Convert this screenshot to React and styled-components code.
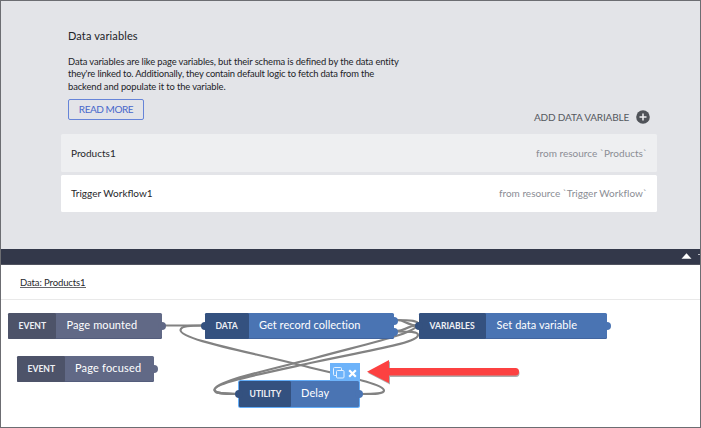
import React from 'react';
import styled, { createGlobalStyle } from 'styled-components';

const Global = createGlobalStyle`
  * { box-sizing: border-box; }
  body { margin: 0; font-family: Lato, "Open Sans", sans-serif; overflow: hidden; }
`;

const Frame = styled.main`
  display: flex;
  flex-direction: column;
  width: 701px;
  height: 428px;
  border: 1px solid #6c6d72;
  background: #fff;
  overflow: hidden;
`;

const VariablesPanel = styled.section`
  height: 248px;
  padding: 28px 43px 0 60px;
  background: #e3e4e8;
`;

const Intro = styled.div`
  padding-left: 7px;
  color: #222327;
`;

const Title = styled.h1`
  margin: 0;
  font-size: 11px;
  line-height: 14px;
  font-weight: 400;
  letter-spacing: 0.12px;
  color: #222327;
`;

const Description = styled.p`
  margin: 13px 0 0;
  font-size: 9.4px;
  line-height: 12.4px;
  white-space: nowrap;
`;

const Line = styled.span`
  display: block;
  letter-spacing: ${(p) => p.$spacing};
`;

const Actions = styled.div`
  display: flex;
  justify-content: space-between;
  align-items: flex-start;
  height: 35px;
  margin-top: 6px;
  padding: 0 7px;
`;

const ReadMore = styled.button`
  width: 76px;
  height: 21px;
  padding: 0 0 1px;
  border: 1px solid #6684d8;
  border-radius: 2px;
  background: transparent;
  color: #4767cb;
  font: 400 10px/18px Lato, sans-serif;
  letter-spacing: -0.45px;
`;

const AddButton = styled.button`
  display: flex;
  align-items: center;
  gap: 7px;
  height: 14px;
  margin-top: 11px;
  padding: 0;
  border: 0;
  background: none;
  color: #55585e;
  font: 400 10px/14px Lato, sans-serif;
  letter-spacing: -0.18px;
  white-space: nowrap;
`;

const AddLabel = styled.span`
  padding-bottom: 1px;
`;

const VariableRow = styled.div`
  display: flex;
  align-items: center;
  justify-content: space-between;
  height: 37.5px;
  margin-bottom: 3px;
  padding: 0 10px;
  border-radius: 1.5px;
  background: ${(p) => (p.$selected ? '#eeeff1' : '#fff')};
  font-size: 10px;
  line-height: 12px;
  color: #26272b;
`;

const RowName = styled.span``;

const Resource = styled.span`
  color: #8b8d94;
  letter-spacing: 0.02px;
`;

const Divider = styled.div`
  display: flex;
  flex: none;
  justify-content: flex-end;
  height: 16px;
  background: #33384a;
  border-bottom: 1px solid #50535f;
`;

const LogicHeader = styled.div`
  flex: none;
  height: 35px;
  padding: 11px 0 0 19px;
  border-bottom: 1.5px solid #e9e9e9;
  font-size: 9.5px;
  line-height: 13px;
  letter-spacing: -0.11px;
  color: #26272b;
`;

const LogicTitle = styled.span`
  display: inline-block;
  height: 12px;
  line-height: 13px;
  border-bottom: 1px solid #67686c;
`;

const Canvas = styled.section`
  position: relative;
  flex: 1;
`;

const Wires = styled.svg`
  position: absolute;
  left: -1px;
  top: -300px;
  width: 701px;
  height: 428px;
  pointer-events: none;
`;

const palettes = {
  event: ['#4d5369', '#616986'],
  action: ['#34517f', '#4a74b3'],
};

const Node = styled.div`
  position: absolute;
  left: ${(p) => p.$x - 1}px;
  top: ${(p) => p.$y - 300}px;
  display: flex;
  width: ${(p) => p.$w}px;
  height: 26px;
  border-radius: 1.5px;
  background: ${(p) => palettes[p.$kind][1]};
  box-shadow: ${(p) => (p.$active ? '0 0 0 1px #63adf8' : 'inset 0 -1px 0 rgba(40, 50, 90, 0.22)')};
  color: #fff;
`;

const Category = styled.span`
  width: ${(p) => p.$w}px;
  padding-left: 10.5px;
  border-radius: 1.5px;
  background: ${(p) => palettes[p.$kind][0]};
  font-size: 8.6px;
  font-weight: 700;
  line-height: 26px;
  letter-spacing: 0;
  white-space: nowrap;
  color: #eef0f5;
`;

const Label = styled.span`
  padding-left: 10.5px;
  font-size: 11px;
  line-height: 24px;
  letter-spacing: ${(p) => p.$spacing};
  white-space: nowrap;
`;

const Port = styled.i`
  position: absolute;
  left: ${(p) => p.$x - 4}px;
  top: ${(p) => p.$y - 4}px;
  width: 8px;
  height: 8px;
  border-radius: 50%;
  background: ${(p) => palettes[p.$kind][p.$input ? 0 : 1]};
`;

const NodeTools = styled.div`
  position: absolute;
  left: 329px;
  top: 63px;
  display: flex;
  align-items: center;
  gap: 3px;
  width: 30px;
  height: 18px;
  padding: 2px 0 0 3px;
  background: #6db3fa;
`;

const nodes = [
  { x: 8, y: 313, w: 154, cw: 48, kind: 'event', cat: 'EVENT', label: 'Page mounted', ls: '0.1px', ports: [[154, 13]] },
  { x: 17, y: 356, w: 137, cw: 47.5, kind: 'event', cat: 'EVENT', label: 'Page focused', ls: '0.18px', ports: [[137, 13]] },
  { x: 205, y: 313, w: 189, cw: 43.5, kind: 'action', cat: 'DATA', label: 'Get record collection', ls: '0.03px', ports: [[0, 13, true], [189, 8], [189, 19]] },
  { x: 419, y: 313, w: 188, cw: 67, kind: 'action', cat: 'VARIABLES', label: 'Set data variable', ls: '0.05px', ports: [[0, 13, true], [188, 13]] },
  { x: 239, y: 381, w: 120, cw: 51.5, kind: 'action', cat: 'UTILITY', label: 'Delay', ls: '0.1px', active: true, ports: [[0, 13, true], [120, 13]] },
];

const wires = [
  'M164 325.5H204',
  'M361 394C375 394 384 394 384 390.5C384 384 340 375 300 365C240 350 180 339 180.5 330C181 325.5 190 325.5 204 325.5',
  'M396 320C407 320 405 325.5 418 325.5',
  'M396 331C407 331 405 325.5 418 325.5',
  'M396 320C412 320 418 321 418 324C418 333 370 343 315 358C260 372 214 382 214.5 390C215 394 226 394 238 394',
  'M396 331.5C412 331.5 418 332 418 335C418 343 370 350 315 362C260 374 214 383 214.5 390C215 394 226 394 238 394',
];

export default function App() {
  return (
    <>
      <Global />
      <Frame>
        <VariablesPanel>
          <Intro>
            <Title>Data variables</Title>
            <Description>
              <Line $spacing="-0.11px">Data variables are like page variables, but their schema is defined by the data entity</Line>
              <Line $spacing="-0.17px">they're linked to. Additionally, they contain default logic to fetch data from the</Line>
              <Line $spacing="-0.11px">backend and populate it to the variable.</Line>
            </Description>
          </Intro>
          <Actions>
            <ReadMore>READ MORE</ReadMore>
            <AddButton>
              <AddLabel>ADD DATA VARIABLE</AddLabel>
              <svg width="14" height="14" viewBox="0 0 14 14">
                <circle cx="7" cy="7" r="6.8" fill="#505359" />
                <path d="M7 3.5V10.5M3.5 7H10.5" stroke="#f0f0f2" strokeWidth="1.5" />
              </svg>
            </AddButton>
          </Actions>
          <VariableRow $selected>
            <RowName>Products1</RowName>
            <Resource>from resource `Products`</Resource>
          </VariableRow>
          <VariableRow>
            <RowName>Trigger Workflow1</RowName>
            <Resource>from resource `Trigger Workflow`</Resource>
          </VariableRow>
        </VariablesPanel>
        <Divider>
          <svg width="20" height="15" viewBox="0 0 20 15">
            <path d="M1.5 9.8L6.5 4.3L11.5 9.8Z" fill="#fff" />
            <path d="M18 5.5H20" stroke="#b9bbc3" />
          </svg>
        </Divider>
        <LogicHeader><LogicTitle>Data: Products1</LogicTitle></LogicHeader>
        <Canvas>
          <Wires viewBox="0 0 701 428" fill="none" stroke="#828282" strokeWidth="2.2">
            {wires.map((d) => <path key={d} d={d} />)}
          </Wires>
          {nodes.map((n) => (
            <Node key={n.label} $x={n.x} $y={n.y} $w={n.w} $kind={n.kind} $active={n.active}>
              {n.ports.map(([x, y, input]) => <Port key={`${x}-${y}`} $x={x} $y={y} $kind={n.kind} $input={input} />)}
              <Category $w={n.cw} $kind={n.kind}>{n.cat}</Category>
              <Label $spacing={n.ls}>{n.label}</Label>
            </Node>
          ))}
          <NodeTools>
            <svg width="12" height="12" viewBox="0 0 12 12" fill="none" stroke="#e4f1ff">
              <path d="M3 8.5H1.5Q.5 8.5 .5 7.5V1.5Q.5 .5 1.5 .5H7.5Q8.5 .5 8.5 1.5V3" />
              <rect x="3.5" y="3.5" width="7.5" height="7.5" rx="1" />
            </svg>
            <svg width="9" height="9" viewBox="0 0 9 9"><path d="M1.2 1.2L7.8 7.8M7.8 1.2L1.2 7.8" stroke="#fff" strokeWidth="2.2" /></svg>
          </NodeTools>
          <Wires viewBox="0 0 701 428">
            <path d="M368 373L390 361.5V369.5H516Q519.5 369.5 519.5 373Q519.5 377 516 377H390V384.5Z" fill="#777" opacity=".6" />
            <path d="M367 371.8L389 360V368H515.5Q519 368 519 371.7Q519 375.5 515.5 375.5H389V383Z" fill="#fc4141" />
          </Wires>
        </Canvas>
      </Frame>
    </>
  );
}
